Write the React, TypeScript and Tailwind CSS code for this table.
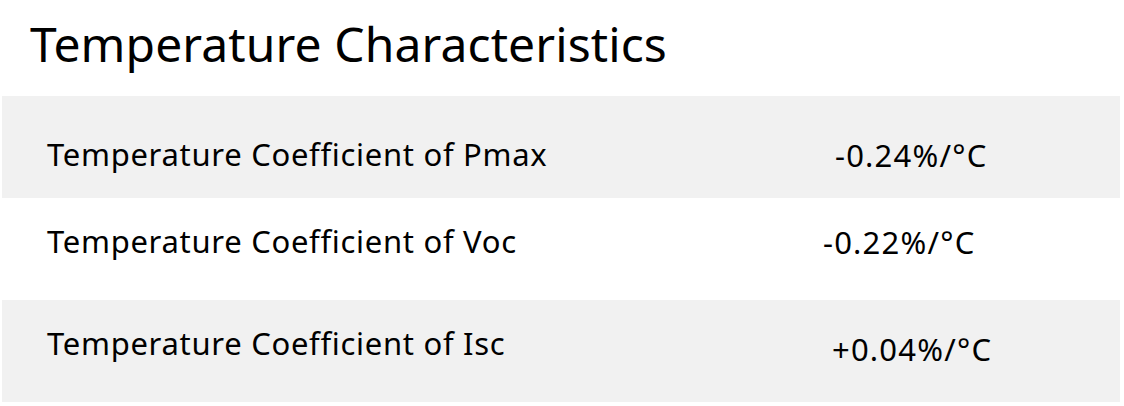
const rows = [
  { label: "Temperature Coefficient of Pmax", value: "-0.24%/°C", bg: "bg-[#f1f1f1]", labelTop: "pt-[43px]", valueTop: "pt-[44px]", valueLeft: "pl-[33px]" },
  { label: "Temperature Coefficient of Voc", value: "-0.22%/°C", bg: "bg-white", labelTop: "pt-[28px]", valueTop: "pt-[29px]", valueLeft: "pl-[21px]" },
  { label: "Temperature Coefficient of Isc", value: "+0.04%/°C", bg: "bg-[#f1f1f1]", labelTop: "pt-[28px]", valueTop: "pt-[34px]", valueLeft: "pl-[30px]" },
];

export default function App() {
  return (
    <div className="w-[1124px] h-[406px] bg-white text-black overflow-hidden" style={{ fontFamily: '"Noto Sans", sans-serif' }}>
      <h1 className="pl-[30px] pt-[20px] text-[48px] leading-[48px] font-normal tracking-[0.1px] h-[96px]">Temperature Characteristics</h1>
      <div className="mx-[2px] w-[1118px]">
        {rows.map((row) => (
          <div key={row.label} className={`flex h-[102px] text-[31px] leading-[31px] ${row.bg}`}>
            <div className={`w-[800px] pl-[45px] tracking-[0.7px] ${row.labelTop}`}>{row.label}</div>
            <div className={`tracking-[1.2px] ${row.valueLeft} ${row.valueTop}`}>{row.value}</div>
          </div>
        ))}
      </div>
    </div>
  );
}
